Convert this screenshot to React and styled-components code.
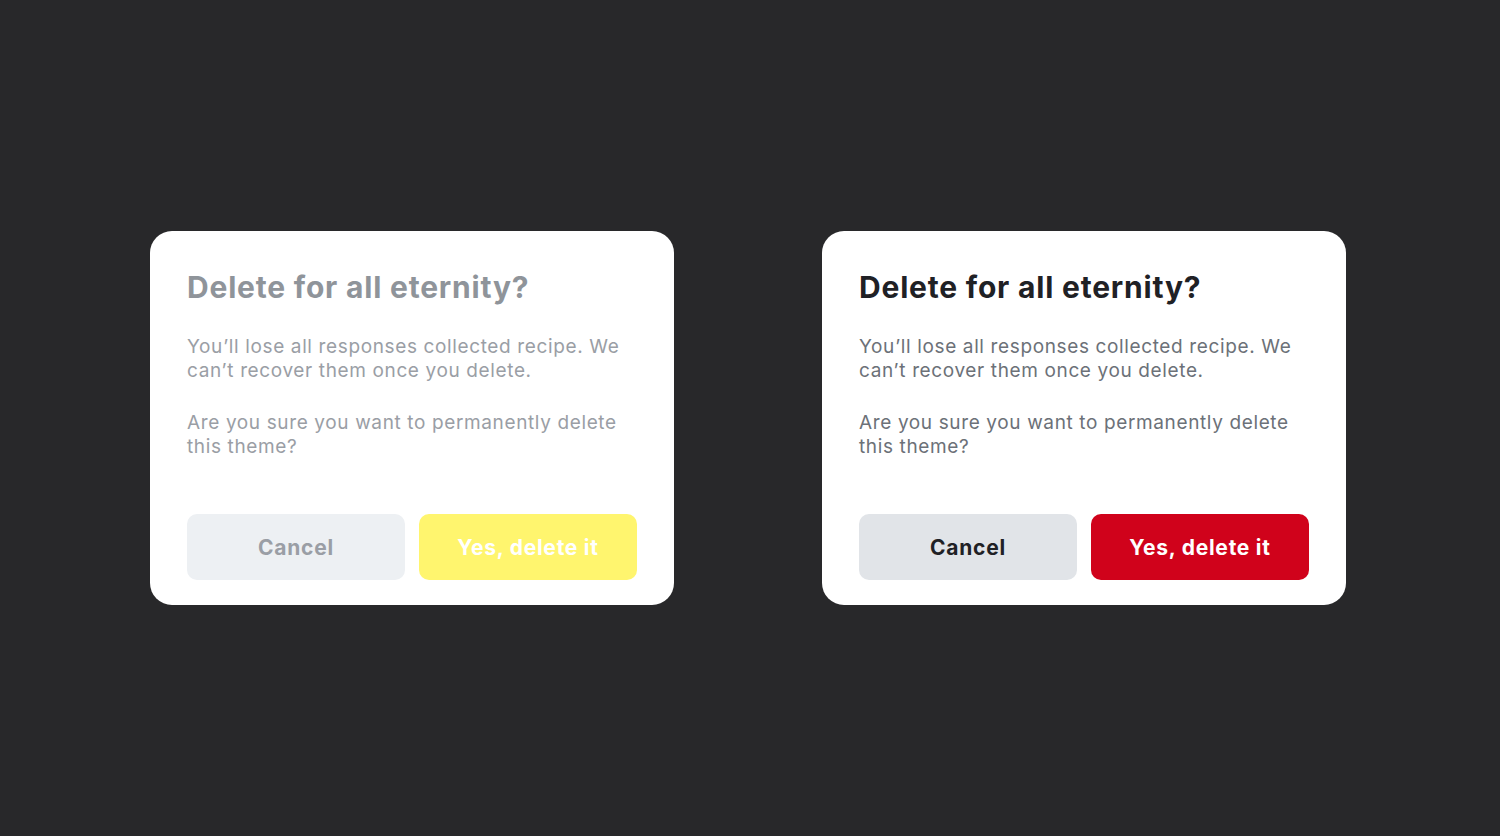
import styled, { createGlobalStyle } from 'styled-components';

const GlobalStyle = createGlobalStyle`
  html, body {
    margin: 0;
    padding: 0;
    background: #28282a;
  }
  body {
    font-family: Inter, "Noto Sans", "Liberation Sans", sans-serif;
  }
`;

const Page = styled.div`
  width: 1500px;
  height: 836px;
  display: flex;
  align-items: center;
  justify-content: center;
  gap: 148px;
  padding-right: 4px;
  box-sizing: border-box;
`;

const Card = styled.div`
  width: 524px;
  height: 374px;
  box-sizing: border-box;
  background: #ffffff;
  border-radius: 22px;
  padding: 38px 37px 25px;
  display: flex;
  flex-direction: column;
`;

const Title = styled.h2`
  margin: 0;
  font-size: 30px;
  line-height: 36px;
  font-weight: 700;
  letter-spacing: 0.8px;
  color: ${props => (props.muted ? '#8f949a' : '#1f2125')};
`;

const Body = styled.p`
  margin: ${props => (props.first ? '30px' : '28px')} 0 0;
  font-size: 19px;
  line-height: 24px;
  letter-spacing: 0.63px;
  color: ${props => (props.muted ? '#9a9ea5' : '#6c7178')};
`;

const Actions = styled.div`
  margin-top: auto;
  display: grid;
  grid-template-columns: 1fr 1fr;
  gap: 14px;
`;

const Button = styled.button`
  height: 66px;
  border: none;
  border-radius: 10px;
  font-family: inherit;
  font-size: 21px;
  font-weight: 700;
  letter-spacing: 0.75px;
  cursor: pointer;
  background: ${props => props.bg};
  color: ${props => props.fg};
`;

const Dialog = ({ muted }) => (
  <Card>
    <Title muted={muted}>Delete for all eternity?</Title>
    <Body muted={muted} first>
      You’ll lose all responses collected recipe. We can’t recover them once you delete.
    </Body>
    <Body muted={muted}>
      Are you sure you want to permanently delete this theme?
    </Body>
    <Actions>
      <Button bg={muted ? '#edf0f3' : '#e1e4e8'} fg={muted ? '#9a9ea5' : '#1f2125'}>
        Cancel
      </Button>
      <Button bg={muted ? '#fff56e' : '#d0021b'} fg="#ffffff">
        Yes, delete it
      </Button>
    </Actions>
  </Card>
);

export default function App() {
  return (
    <>
      <GlobalStyle />
      <Page>
        <Dialog muted />
        <Dialog />
      </Page>
    </>
  );
}
